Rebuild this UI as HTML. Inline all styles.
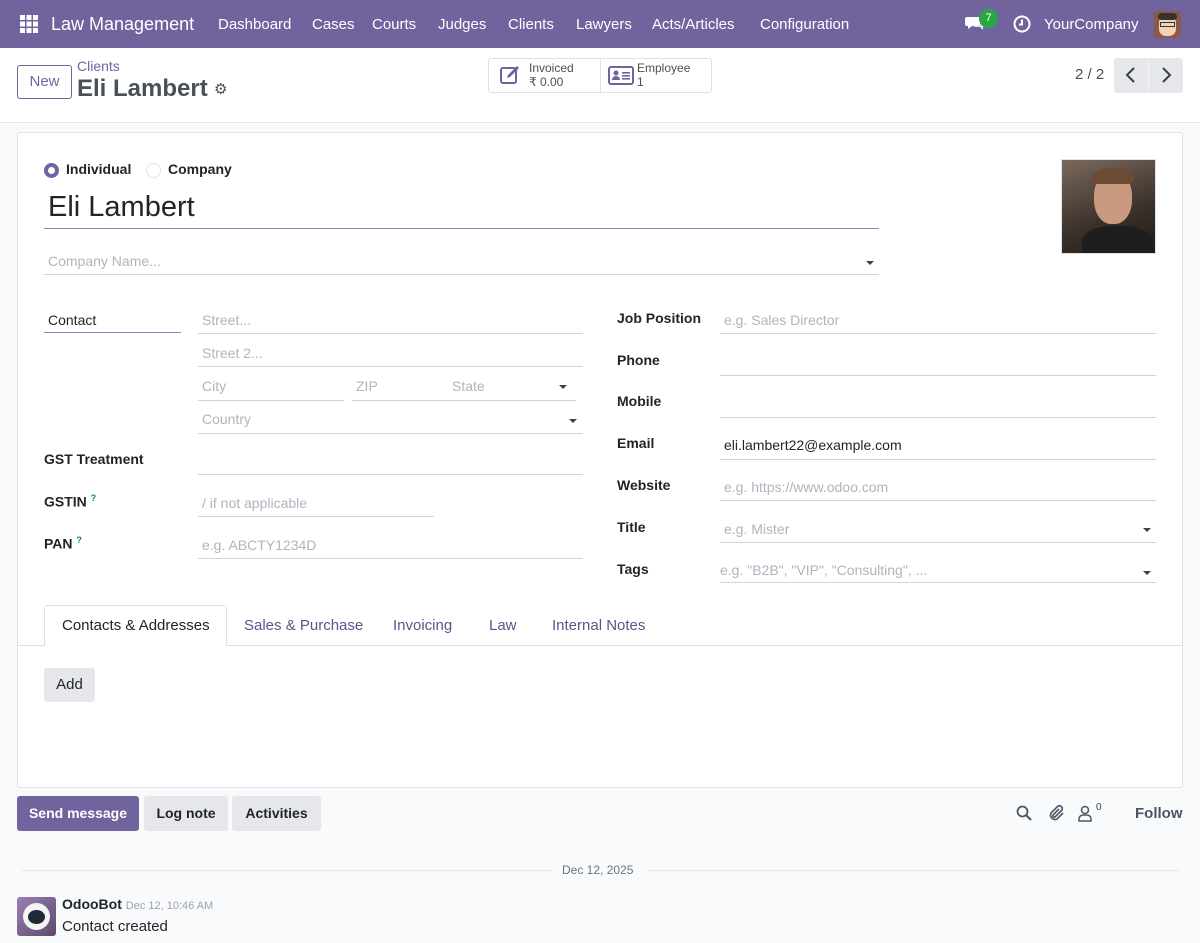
<!DOCTYPE html>
<html><head><meta charset="utf-8">
<style>
*{box-sizing:border-box;margin:0;padding:0}
body{width:1200px;height:943px;overflow:hidden;background:#f9fafb;font-family:"Liberation Sans",sans-serif;color:#374151;font-size:14px;position:relative}
.a{position:absolute;white-space:nowrap}
.nav{position:absolute;left:0;top:0;width:1200px;height:48px;background:#71639e;color:#fff}
.nav .a{top:16px;font-size:15px}
.hdr{position:absolute;left:0;top:48px;width:1200px;height:75px;background:#fff;border-bottom:1px solid #e5e7eb}
.sheet{position:absolute;left:17px;top:132px;width:1166px;height:656px;background:#fff;border:1px solid #dee2e6;border-radius:3px}
.ln{position:absolute;height:1px;background:#d1d5db}
.ph{color:#adb5bd;font-size:14px}
.lbl{font-weight:bold;color:#212529;font-size:14px}
.caret{position:absolute;width:0;height:0;border-left:4px solid transparent;border-right:4px solid transparent;border-top:4px solid #374151}
.btn{position:absolute;border-radius:3px;font-weight:bold;font-size:14px;text-align:center}
</style></head><body>
<div class="nav">
  <svg class="a" style="left:20px;top:15px" width="18" height="18" viewBox="0 0 18 18" fill="#fff"><rect x="0" y="0" width="5" height="5"/><rect x="6.5" y="0" width="5" height="5"/><rect x="13" y="0" width="5" height="5"/><rect x="0" y="6.5" width="5" height="5"/><rect x="6.5" y="6.5" width="5" height="5"/><rect x="13" y="6.5" width="5" height="5"/><rect x="0" y="13" width="5" height="5"/><rect x="6.5" y="13" width="5" height="5"/><rect x="13" y="13" width="5" height="5"/></svg>
  <div class="a" style="left:51px;top:14px;font-size:18px">Law Management</div>
  <div class="a" style="left:218px">Dashboard</div>
  <div class="a" style="left:312px">Cases</div>
  <div class="a" style="left:372px">Courts</div>
  <div class="a" style="left:438px">Judges</div>
  <div class="a" style="left:508px">Clients</div>
  <div class="a" style="left:576px">Lawyers</div>
  <div class="a" style="left:652px">Acts/Articles</div>
  <div class="a" style="left:760px">Configuration</div>
  <svg class="a" style="left:965px;top:15px" width="22" height="18" viewBox="0 0 22 18"><path d="M2 2h11a2 2 0 0 1 2 2v5a2 2 0 0 1-2 2H7l-4 3v-3H2a2 2 0 0 1-2-2V4a2 2 0 0 1 2-2z" fill="#fff"/><path d="M8 12h7l3 3v-3h1a2 2 0 0 0 2-2V7" fill="#e5e7eb"/></svg>
  <div class="a" style="left:979px;top:9px;width:19px;height:19px;border-radius:50%;background:#28a745;font-size:11px;text-align:center;line-height:18px">7</div>
  <svg class="a" style="left:1013px;top:15px" width="18" height="18" viewBox="0 0 18 18"><circle cx="9" cy="9" r="7.5" fill="none" stroke="#fff" stroke-width="2"/><path d="M9 4.5V9.5H6" fill="none" stroke="#fff" stroke-width="2"/></svg>
  <div class="a" style="left:1044px">YourCompany</div>
  <div class="a" style="left:1154px;top:11px;width:27px;height:27px;border-radius:3px;background:#8b5a4a;overflow:hidden"><div style="position:absolute;left:5px;top:5px;width:17px;height:20px;border-radius:7px;background:#f1d3b5"></div><div style="position:absolute;left:4px;top:2px;width:19px;height:7px;background:#333;border-radius:4px"></div><div style="position:absolute;left:6px;top:11px;width:15px;height:5px;border:1px solid #333"></div></div>
</div>
<div class="hdr">
  <div class="btn" style="left:17px;top:17px;width:55px;height:34px;border:1px solid #71639e;color:#71639e;line-height:32px;font-weight:normal;font-size:15px">New</div>
  <div class="a" style="left:77px;top:10px;color:#71639e;font-size:14px">Clients</div>
  <div class="a" style="left:77px;top:27px;font-size:24px;font-weight:bold;color:#495057">Eli Lambert</div>
  <div class="a" style="left:214px;top:32px;font-size:15px;color:#495057">⚙</div>
  <div class="a" style="left:488px;top:10px;width:224px;height:35px;border:1px solid #dee2e6;border-radius:3px"></div>
  <div class="a" style="left:600px;top:10px;width:1px;height:35px;background:#dee2e6"></div>
  <svg class="a" style="left:500px;top:17px" width="22" height="20" viewBox="0 0 22 20"><rect x="1" y="3" width="15" height="15" rx="2" fill="none" stroke="#71639e" stroke-width="2"/><path d="M7 13l1-3 9-9 2 2-9 9z" fill="#71639e"/></svg>
  <div class="a" style="left:529px;top:13px;font-size:12px;color:#495057;line-height:14px">Invoiced<br>₹ 0.00</div>
  <svg class="a" style="left:608px;top:18px" width="26" height="19" viewBox="0 0 26 19"><rect x="1" y="1" width="24" height="17" rx="2" fill="none" stroke="#71639e" stroke-width="2"/><circle cx="8" cy="7" r="2.5" fill="#71639e"/><path d="M4 14a4 4 0 0 1 8 0z" fill="#71639e"/><rect x="14" y="6" width="8" height="1.6" fill="#71639e"/><rect x="14" y="9" width="8" height="1.6" fill="#71639e"/><rect x="14" y="12" width="8" height="1.6" fill="#71639e"/></svg>
  <div class="a" style="left:637px;top:13px;font-size:12px;color:#495057;line-height:14px">Employee<br>1</div>
  <div class="a" style="left:1075px;top:18px;font-size:15px;color:#495057">2 / 2</div>
  <div class="a" style="left:1114px;top:10px;width:69px;height:35px;background:#e5e7eb;border-radius:3px"></div>
  <div class="a" style="left:1148px;top:10px;width:1px;height:35px;background:#f3f4f6"></div>
  <svg class="a" style="left:1124px;top:19px" width="14" height="16" viewBox="0 0 14 16"><path d="M10 1L3 8l7 7" fill="none" stroke="#374151" stroke-width="2"/></svg>
  <svg class="a" style="left:1159px;top:19px" width="14" height="16" viewBox="0 0 14 16"><path d="M4 1l7 7-7 7" fill="none" stroke="#374151" stroke-width="2"/></svg>
</div>

<div class="sheet"></div>
<div class="a" style="left:44px;top:163px;width:15px;height:15px;border-radius:50%;border:4px solid #71639e;background:#fff"></div>
<div class="a lbl" style="left:66px;top:161px">Individual</div>
<div class="a" style="left:146px;top:163px;width:15px;height:15px;border-radius:50%;border:1px solid #dee2e6"></div>
<div class="a lbl" style="left:168px;top:161px">Company</div>
<div class="a" style="left:48px;top:191px;font-size:29px;color:#212529">Eli Lambert</div>
<div class="ln" style="left:44px;top:228px;width:835px;background:#8f86b8"></div>
<div class="a ph" style="left:48px;top:253px">Company Name...</div>
<div class="caret" style="left:866px;top:261px"></div>
<div class="ln" style="left:44px;top:274px;width:835px"></div>
<div class="a" style="left:1061px;top:159px;width:95px;height:95px;border:1px solid #dee2e6;background:linear-gradient(160deg,#7a6a5c,#3b312b 60%,#1e1a17);overflow:hidden">
  <div style="position:absolute;left:32px;top:12px;width:38px;height:52px;border-radius:45%;background:#c99a80"></div>
  <div style="position:absolute;left:30px;top:8px;width:42px;height:16px;border-radius:50% 50% 20% 20%;background:#6b4b34"></div>
  <div style="position:absolute;left:20px;top:66px;width:70px;height:40px;border-radius:40% 40% 0 0;background:#1e1e1e"></div>
</div>
<div class="a" style="left:48px;top:312px;color:#212529">Contact</div>
<div class="ln" style="left:44px;top:332px;width:137px;background:#8f86b8"></div>
<div class="a ph" style="left:202px;top:312px">Street...</div>
<div class="ln" style="left:198px;top:333px;width:385px"></div>
<div class="a ph" style="left:202px;top:345px">Street 2...</div>
<div class="ln" style="left:198px;top:366px;width:385px"></div>
<div class="a ph" style="left:202px;top:378px">City</div>
<div class="ln" style="left:198px;top:400px;width:146px"></div>
<div class="a ph" style="left:356px;top:378px">ZIP</div>
<div class="a ph" style="left:452px;top:378px">State</div>
<div class="caret" style="left:559px;top:385px"></div>
<div class="ln" style="left:352px;top:400px;width:224px"></div>
<div class="a ph" style="left:202px;top:411px">Country</div>
<div class="caret" style="left:569px;top:419px"></div>
<div class="ln" style="left:198px;top:433px;width:385px"></div>
<div class="a lbl" style="left:44px;top:451px">GST Treatment</div>
<div class="ln" style="left:198px;top:474px;width:385px"></div>
<div class="a lbl" style="left:44px;top:493px">GSTIN <sup style="color:#017e84;font-size:9px">?</sup></div>
<div class="a ph" style="left:202px;top:495px">/ if not applicable</div>
<div class="ln" style="left:198px;top:516px;width:236px"></div>
<div class="a lbl" style="left:44px;top:535px">PAN <sup style="color:#017e84;font-size:9px">?</sup></div>
<div class="a ph" style="left:202px;top:537px">e.g. ABCTY1234D</div>
<div class="ln" style="left:198px;top:558px;width:385px"></div>
<div class="a lbl" style="left:617px;top:310px">Job Position</div>
<div class="a ph" style="left:724px;top:312px">e.g. Sales Director</div>
<div class="ln" style="left:720px;top:333px;width:436px"></div>
<div class="a lbl" style="left:617px;top:352px">Phone</div>
<div class="ln" style="left:720px;top:375px;width:436px"></div>
<div class="a lbl" style="left:617px;top:393px">Mobile</div>
<div class="ln" style="left:720px;top:417px;width:436px"></div>
<div class="a lbl" style="left:617px;top:435px">Email</div>
<div class="a" style="left:724px;top:437px;color:#212529">eli.lambert22@example.com</div>
<div class="ln" style="left:720px;top:459px;width:436px"></div>
<div class="a lbl" style="left:617px;top:477px">Website</div>
<div class="a ph" style="left:724px;top:479px">e.g. https://www.odoo.com</div>
<div class="ln" style="left:720px;top:500px;width:436px"></div>
<div class="a lbl" style="left:617px;top:519px">Title</div>
<div class="a ph" style="left:724px;top:521px">e.g. Mister</div>
<div class="caret" style="left:1143px;top:528px"></div>
<div class="ln" style="left:720px;top:542px;width:436px"></div>
<div class="a lbl" style="left:617px;top:561px">Tags</div>
<div class="a ph" style="left:720px;top:562px">e.g. "B2B", "VIP", "Consulting", ...</div>
<div class="caret" style="left:1143px;top:571px"></div>
<div class="ln" style="left:720px;top:582px;width:436px"></div>
<div class="ln" style="left:18px;top:645px;width:1164px;background:#dee2e6"></div>
<div class="a" style="left:44px;top:605px;width:183px;height:41px;background:#fff;border:1px solid #dee2e6;border-bottom:none;border-radius:3px 3px 0 0"></div>
<div class="a" style="left:62px;top:617px;font-size:15px;color:#212529">Contacts &amp; Addresses</div>
<div class="a" style="left:244px;top:617px;font-size:15px;color:#5c5488">Sales &amp; Purchase</div>
<div class="a" style="left:393px;top:617px;font-size:15px;color:#5c5488">Invoicing</div>
<div class="a" style="left:489px;top:617px;font-size:15px;color:#5c5488">Law</div>
<div class="a" style="left:552px;top:617px;font-size:15px;color:#5c5488">Internal Notes</div>
<div class="btn" style="left:44px;top:668px;width:51px;height:34px;background:#e5e7eb;line-height:34px;font-weight:normal;font-size:15px;color:#212529">Add</div>
<div class="btn" style="left:17px;top:796px;width:122px;height:35px;background:#71639e;color:#fff;line-height:35px">Send message</div>
<div class="btn" style="left:144px;top:796px;width:84px;height:35px;background:#e5e7eb;color:#212529;line-height:35px">Log note</div>
<div class="btn" style="left:232px;top:796px;width:89px;height:35px;background:#e5e7eb;color:#212529;line-height:35px">Activities</div>
<svg class="a" style="left:1016px;top:805px" width="16" height="16" viewBox="0 0 16 16"><circle cx="6.5" cy="6.5" r="5" fill="none" stroke="#4b5563" stroke-width="1.8"/><path d="M10 10l5 5" stroke="#4b5563" stroke-width="2"/></svg>
<svg class="a" style="left:1047px;top:804px" width="18" height="18" viewBox="0 0 18 18"><path d="M12 5l-6 6a1.5 1.5 0 0 0 2 2l7-7a3 3 0 0 0-4-4l-7 7a4.5 4.5 0 0 0 6 6l6-6" fill="none" stroke="#4b5563" stroke-width="1.6"/></svg>
<svg class="a" style="left:1078px;top:805px" width="14" height="17" viewBox="0 0 14 17"><circle cx="7" cy="5" r="3.5" fill="none" stroke="#4b5563" stroke-width="1.5"/><path d="M1 16v-2a4 4 0 0 1 4-4h4a4 4 0 0 1 4 4v2z" fill="none" stroke="#4b5563" stroke-width="1.5"/></svg>
<div class="a" style="left:1096px;top:802px;font-size:10px;color:#374151">0</div>
<div class="a" style="left:1135px;top:805px;font-size:15px;font-weight:bold;color:#4b5563">Follow</div>
<div class="ln" style="left:22px;top:870px;width:530px;background:#e5e7eb"></div>
<div class="a" style="left:562px;top:863px;font-size:12px;color:#6b7280">Dec 12, 2025</div>
<div class="ln" style="left:648px;top:870px;width:532px;background:#e5e7eb"></div>
<div class="a" style="left:17px;top:897px;width:39px;height:39px;border-radius:3px;background:linear-gradient(135deg,#9b7fb0,#5d4a6e)"><div style="position:absolute;left:6px;top:6px;width:27px;height:27px;border-radius:50%;background:#f3f4f6"></div><div style="position:absolute;left:11px;top:13px;width:17px;height:14px;border-radius:50%;background:#1f2937"></div></div>
<div class="a" style="left:62px;top:896px;font-weight:bold;font-size:14px;color:#212529">OdooBot <span style="font-weight:normal;font-size:11px;color:#9ca3af">Dec 12, 10:46 AM</span></div>
<div class="a" style="left:62px;top:918px;font-size:15px;color:#212529">Contact created</div>
</body></html>
